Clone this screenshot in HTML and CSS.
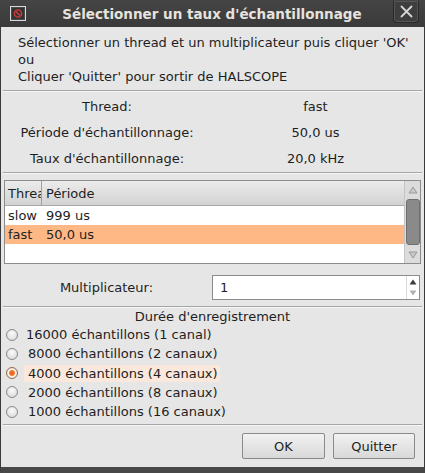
FILE: index.html
```html
<!DOCTYPE html>
<html lang="fr">
<head>
<meta charset="utf-8">
<title>Sélectionner un taux d'échantillonnage</title>
<link rel="stylesheet" href="styles.css">
</head>
<body>
<div class="window">
  <div class="titlebar">
    <span class="app-icon">
      <svg width="16" height="15" viewBox="0 0 16 15">
        <rect x="0.5" y="0.5" width="15" height="14" fill="#4a4a4a" stroke="#d8d8d8"/>
        <rect x="2" y="2" width="12" height="11" fill="#333"/>
        <circle cx="8" cy="7.5" r="3.6" fill="none" stroke="#d23a3a" stroke-width="1.4"/>
        <line x1="5.6" y1="5.2" x2="10.4" y2="9.8" stroke="#d23a3a" stroke-width="1.4"/>
      </svg>
    </span>
    <span class="title">Sélectionner un taux d'échantillonnage</span>
    <span class="close-btn">
      <svg width="13" height="13" viewBox="0 0 13 13">
        <path d="M1.5 1.5 L11.5 11.5 M11.5 1.5 L1.5 11.5" stroke="#d6d6d6" stroke-width="1.8" stroke-linecap="round"/>
      </svg>
    </span>
  </div>
  <div class="content">
    <div class="message">
      <div>Sélectionner un thread et un multiplicateur puis cliquer 'OK'</div>
      <div>ou</div>
      <div>Cliquer 'Quitter' pour sortir de HALSCOPE</div>
    </div>
    <div class="sep"></div>
    <div class="info">
      <div class="info-label">Thread:</div><div class="info-value">fast</div>
      <div class="info-label">Période d'échantillonnage:</div><div class="info-value">50,0 us</div>
      <div class="info-label">Taux d'échantillonnage:</div><div class="info-value">20,0 kHz</div>
    </div>
    <div class="sep"></div>
    <div class="listbox">
      <div class="list">
        <div class="list-head">
          <div class="col-a">Threa</div>
          <div class="col-b">Période</div>
        </div>
        <div class="list-row"><div class="col-a">slow</div><div class="col-b">999 us</div></div>
        <div class="list-row selected"><div class="col-a">fast</div><div class="col-b">50,0 us</div></div>
      </div>
      <div class="scrollbar">
        <div class="sb-arrow">
          <svg width="10" height="8" viewBox="0 0 10 8"><path d="M5 1 L9 7 L1 7 Z" fill="#c8c8c8" stroke="#9a9a9a"/></svg>
        </div>
        <div class="sb-thumb"></div>
        <div class="sb-arrow">
          <svg width="10" height="8" viewBox="0 0 10 8"><path d="M5 7 L9 1 L1 1 Z" fill="#c8c8c8" stroke="#9a9a9a"/></svg>
        </div>
      </div>
    </div>
    <div class="mult-row">
      <div class="mult-label">Multiplicateur:</div>
      <div class="spinbox">
        <span class="spin-value">1</span>
        <span class="spin-arrows">
          <svg width="8" height="6" viewBox="0 0 8 6"><path d="M4 0.5 L7.5 5.5 L0.5 5.5 Z" fill="#3c3c3c"/></svg>
          <svg width="8" height="6" viewBox="0 0 8 6"><path d="M4 5.5 L7.5 0.5 L0.5 0.5 Z" fill="#b0b0b0"/></svg>
        </span>
      </div>
    </div>
    <div class="sep"></div>
    <div class="group-title">Durée d'enregistrement</div>
    <div class="radios">
      <div class="radio-row"><span class="radio"></span><span class="radio-text">16000 échantillons (1 canal)</span></div>
      <div class="radio-row"><span class="radio"></span><span class="radio-text pad">8000 échantillons (2 canaux)</span></div>
      <div class="radio-row"><span class="radio checked"></span><span class="radio-text pad active">4000 échantillons (4 canaux)</span></div>
      <div class="radio-row"><span class="radio"></span><span class="radio-text pad">2000 échantillons (8 canaux)</span></div>
      <div class="radio-row"><span class="radio"></span><span class="radio-text pad">1000 échantillons (16 canaux)</span></div>
    </div>
    <div class="sep"></div>
    <div class="buttons">
      <button class="btn ok">OK</button>
      <button class="btn quit">Quitter</button>
    </div>
  </div>
</div>
</body>
</html>
```
FILE: styles.css
```css
* { box-sizing: border-box; }
html, body { margin: 0; padding: 0; }
body {
  width: 425px;
  height: 473px;
  overflow: hidden;
  background: #3c3c3c;
  font-family: "DejaVu Sans", sans-serif;
  font-size: 13px;
  color: #1e1e1e;
}
.window {
  width: 425px;
  height: 473px;
  display: flex;
  flex-direction: column;
}
.titlebar {
  height: 27px;
  flex: none;
  display: flex;
  align-items: center;
  background: linear-gradient(#454545, #3a3a3a);
}
.app-icon {
  width: 16px;
  height: 15px;
  margin-left: 10px;
  display: flex;
}
.title {
  flex: 1;
  text-align: center;
  color: #e6e3de;
  font-weight: bold;
  font-size: 13.5px;
  padding-left: 5px;
}
.close-btn {
  width: 26px;
  height: 22px;
  margin-right: 6px;
  margin-bottom: 4px;
  border: 1px solid #282828;
  border-top: none;
  border-radius: 0 0 4px 4px;
  box-shadow: inset 0 0 0 1px #555;
  display: flex;
  align-items: center;
  justify-content: center;
  background: #3e3e3e;
}
.content {
  flex: 1;
  background: #e6e6e6;
  border-left: 1px solid #3a3a3a;
  border-right: 1px solid #3a3a3a;
  border-bottom: 6px solid #484848;
  display: flex;
  flex-direction: column;
}
.message {
  padding: 7px 0 0 17px;
  line-height: 17px;
  height: 63px;
  flex: none;
}
.sep {
  height: 2px;
  margin: 0 2px;
  border-top: 1px solid #a6a6a6;
  border-bottom: 1px solid #f6f6f6;
  flex: none;
}
.info {
  display: grid;
  grid-template-columns: 212px 1fr;
  grid-auto-rows: 26px;
  align-items: center;
  text-align: center;
  padding: 1px 0;
  flex: none;
}
.info-value { padding-right: 6px; }
.listbox {
  margin: 6px 3px 0 3px;
  height: 84px;
  flex: none;
  display: flex;
  border: 1px solid #8c8c8c;
  background: #fff;
}
.list {
  flex: 1;
  display: flex;
  flex-direction: column;
}
.list-head {
  height: 25px;
  display: flex;
  align-items: center;
  background: linear-gradient(#ececec, #d2d2d2);
  border-bottom: 1px solid #a8a8a8;
}
.list-head .col-a {
  height: 100%;
  display: flex;
  align-items: center;
  border-right: 1px solid #a0a0a0;
  overflow: hidden;
  white-space: nowrap;
}
.col-a { width: 37px; padding-left: 3px; flex: none; }
.col-b { padding-left: 4px; }
.list-row {
  height: 19px;
  display: flex;
  align-items: center;
}
.list-row.selected { background: #feb886; }
.scrollbar {
  width: 16px;
  flex: none;
  background: #dcdcdc;
  border-left: 1px solid #c4c4c4;
  display: flex;
  flex-direction: column;
  align-items: center;
}
.sb-arrow {
  height: 17px;
  display: flex;
  align-items: center;
  justify-content: center;
}
.sb-thumb {
  width: 14px;
  flex: 1;
  margin: 1px 0;
  background: #8a8a8a;
  border: 1px solid #6e6e6e;
  border-radius: 3px;
}
.mult-row {
  height: 42px;
  flex: none;
  display: flex;
  align-items: center;
  padding-top: 4px;
}
.mult-label {
  width: 211px;
  text-align: center;
}
.spinbox {
  width: 208px;
  height: 25px;
  background: #fff;
  border: 1px solid #8c8c8c;
  display: flex;
  align-items: center;
  justify-content: space-between;
  padding-left: 7px;
}
.spin-arrows {
  width: 13px;
  height: 100%;
  border-left: 1px solid #dadada;
  display: flex;
  flex-direction: column;
  align-items: center;
  justify-content: center;
  gap: 5px;
}
.group-title {
  height: 17px;
  line-height: 17px;
  text-align: center;
  flex: none;
}
.radios {
  display: flex;
  flex-direction: column;
  height: 99px;
  flex: none;
}
.radio-row {
  height: 19.25px;
  display: flex;
  align-items: center;
}
.radio {
  width: 12px;
  height: 12px;
  margin-left: 5px;
  margin-right: 6px;
  border-radius: 50%;
  border: 1px solid #8a8a8a;
  background: radial-gradient(circle at 50% 35%, #fbfbfb, #d4d4d4);
  flex: none;
}
.radio.checked {
  border-color: #8f6a52;
  background: radial-gradient(circle, #e2601c 0, #f07a30 2.5px, #fbf2ea 3.5px, #e0d6cf 6px);
}
.radio-text { padding: 1px 2px; }
.radio-text.pad { padding-left: 4px; }
.radio-text.active {
  background: #fbe8dc;
}
.buttons {
  flex: 1;
  display: flex;
  justify-content: flex-end;
  align-items: flex-start;
  padding: 7px 9px 0 0;
  gap: 8px;
}
.btn {
  height: 26px;
  font-family: "DejaVu Sans", sans-serif;
  font-size: 13px;
  color: #1e1e1e;
  background: linear-gradient(#f2f2f2, #d8d8d8);
  border: 1px solid #8a8a8a;
  border-radius: 2px;
  padding: 0;
}
.btn.ok { width: 83px; }
.btn.quit { width: 82px; }
```
